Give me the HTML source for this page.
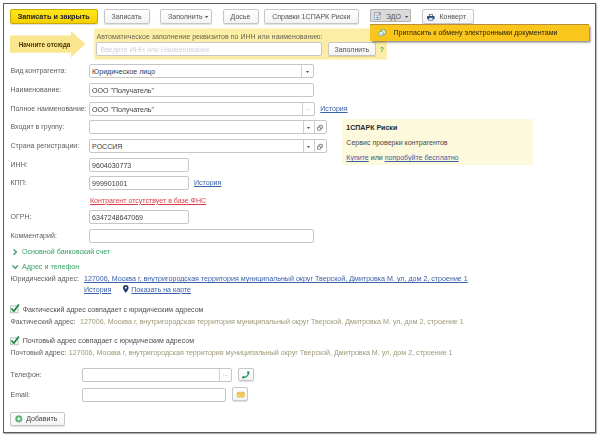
<!DOCTYPE html>
<html><head><meta charset="utf-8">
<style>
html,body{margin:0;padding:0;background:#fff;}
body{width:600px;height:436px;position:relative;overflow:hidden;font-family:"Liberation Sans",sans-serif;font-size:7.05px;color:#606060;}
.a{position:absolute;white-space:nowrap;line-height:10px;}
#frame{position:absolute;left:3px;top:3px;width:593px;height:430px;border:1px solid #5c5c5c;box-shadow:.5px .7px 0 rgba(0,0,0,.4), 1px 1px 2px rgba(0,0,0,.1);box-sizing:border-box;}
.btn{position:absolute;box-sizing:border-box;border:1px solid #c6c6c6;border-radius:2px;background:linear-gradient(#ffffff,#f3f3f3);height:14.5px;top:9.2px;line-height:14.3px;text-align:center;color:#555;white-space:nowrap;box-shadow:0 1px 1px rgba(0,0,0,.13);}
.inp{position:absolute;box-sizing:border-box;border:1px solid #c6c6c6;border-radius:2px;background:#fff;height:14px;line-height:13px;padding-left:2.6px;color:#3a3a3a;white-space:nowrap;}
.lnk{color:#3a62a8;text-decoration:underline;text-decoration-thickness:.6px;text-underline-offset:1px;}
.grn{color:#35a068;}
.olv{color:#9d9975;font-size:7.12px;}
.sb{position:absolute;box-sizing:border-box;border-left:1px solid #cfcfcf;top:0;bottom:0;text-align:center;color:#888;font-size:6px;line-height:11.5px;}
.ic{position:absolute;display:block;}
svg{overflow:visible}
#w{position:absolute;left:0;top:0;width:600px;height:436px;filter:blur(.3px);}
</style></head><body>
<div id="frame"></div>
<div id="w">


<div class="btn" style="left:10px;width:87.5px;background:linear-gradient(#ffe71c,#f5d000);border-color:#c7a900;color:#222;font-weight:bold;font-size:7.27px;">Записать и закрыть</div>
<div class="btn" style="left:103.5px;width:46px;">Записать</div>
<div class="btn" style="left:160px;width:51.5px;text-align:left;padding-left:7px;">Заполнить<svg class="ic" style="left:44px;top:5.6px" width="3.2" height="2" viewBox="0 0 32 20"><polygon points="0,0 32,0 16,20" fill="#444"/></svg></div>
<div class="btn" style="left:222.5px;width:36px;">Досье</div>
<div class="btn" style="left:264px;width:94.5px;">Справки 1СПАРК Риски</div>
<div class="btn" style="left:369.5px;width:41px;background:#dadada;border-color:#b4b4b4;border-radius:1px;text-align:left;padding-left:15.5px;height:13.2px;line-height:13.4px;box-shadow:none;">ЭДО<svg class="ic" style="left:34px;top:5.6px" width="3.2" height="2" viewBox="0 0 32 20"><polygon points="0,0 32,0 16,20" fill="#444"/></svg>
<svg class="ic" style="left:3.5px;top:2px" width="8" height="8.5" viewBox="0 0 80 85"><rect x="8" y="4" width="52" height="70" fill="#f4f6f8" stroke="#8a9098" stroke-width="7"/><rect x="18" y="18" width="32" height="7" fill="#9aa7b8"/><rect x="18" y="32" width="32" height="7" fill="#9aa7b8"/><circle cx="34" cy="56" r="12" fill="#4a8fc8" opacity=".85"/><rect x="52" y="0" width="12" height="30" fill="#7d858f"/></svg></div>
<div class="btn" style="left:422px;width:51.5px;text-align:left;padding-left:16.4px;">Конверт
<svg class="ic" style="left:4px;top:3.6px" width="7.6" height="6.6" viewBox="0 0 80 70"><rect x="20" y="0" width="40" height="22" rx="3" fill="#2b4f7e"/><rect x="27" y="6" width="26" height="14" fill="#fff"/><rect x="0" y="20" width="80" height="36" rx="8" fill="#2b4f7e"/><rect x="18" y="40" width="44" height="28" rx="2" fill="#fff" stroke="#2b4f7e" stroke-width="7"/></svg></div>


<svg class="ic" style="left:0;top:0" width="600" height="70" viewBox="0 0 600 70"><rect x="94.3" y="28.5" width="292.5" height="31" fill="#fdeea6"/></svg>
<svg class="ic" style="left:9.8px;top:30px" width="76" height="27.5" viewBox="0 0 76 27.5"><polygon points="0,5.5 60.9,5.5 60.9,0.7 75.3,14.1 60.9,27.5 60.9,22.8 0,22.8" fill="#fbe690"/></svg>
<div class="a" style="left:18.7px;top:39.5px;color:#4a3c08;font-weight:bold;font-size:6.45px;">Начните отсюда</div>
<div class="a" style="left:96.6px;top:31.7px;color:#6a6650;">Автоматическое заполнение реквизитов по ИНН или наименованию:</div>
<div class="inp" style="left:96px;top:42.4px;width:225.5px;color:#cfd3da;padding-left:3.5px;">Введите ИНН или Наименование</div>
<div class="btn" style="left:327.5px;top:42.4px;width:48.7px;height:13.8px;line-height:13.4px;">Заполнить</div>
<div class="a" style="left:380px;top:44.9px;color:#55a058;font-weight:bold;font-size:6.6px;">?</div>


<div class="a" style="left:369.5px;top:24px;width:219.5px;height:16.5px;background:#fac51c;border-top:.7px solid #b9903a;box-sizing:border-box;box-shadow:1.5px 1.8px 2.2px rgba(0,0,0,.55);"></div>
<svg class="ic" style="left:378.2px;top:28.9px" width="8.4" height="7.8" viewBox="0 0 90 84"><circle cx="56" cy="34" r="28" fill="#e9f2f7" stroke="#5aa05a" stroke-width="9"/><circle cx="32" cy="50" r="26" fill="#f4f8ff" stroke="#6aa86a" stroke-width="9"/><circle cx="32" cy="50" r="7" fill="#5b8fd0"/></svg>
<div class="a" style="left:393.4px;top:27.6px;color:#2a2410;font-size:7.1px;">Пригласить к обмену электронными документами</div>

<div class="a" style="left:10.5px;top:65.90px;">Вид контрагента:</div>
<div class="inp" style="left:88.5px;top:64.00px;width:225.3px;">Юридическое лицо<div class="sb" style="right:0px;width:11.5px"><svg class="ic" style="left:3.6px;top:5.5px" width="3" height="1.9" viewBox="0 0 34 22"><polygon points="0,0 34,0 17,22" fill="#444"/></svg></div></div>
<div class="a" style="left:10.5px;top:84.90px;">Наименование:</div>
<div class="inp" style="left:88.5px;top:83.00px;width:225.5px;">ООО "Получатель"</div>
<div class="a" style="left:10.5px;top:103.90px;">Полное наименование:</div>
<div class="inp" style="left:88.5px;top:102.00px;width:226px;">ООО "Получатель"<div class="sb" style="right:0px;width:11.5px">...</div></div>
<div class="a lnk" style="left:320.3px;top:104.20px;">История</div>
<div class="a" style="left:10.5px;top:121.90px;">Входит в группу:</div>
<div class="inp" style="left:88.5px;top:120.00px;width:238px;"><div class="sb" style="right:11.5px;width:11.5px"><svg class="ic" style="left:3.6px;top:5.5px" width="3" height="1.9" viewBox="0 0 34 22"><polygon points="0,0 34,0 17,22" fill="#444"/></svg></div><div class="sb" style="right:0px;width:11.5px"><svg class="ic" style="left:2.3px;top:3.5px" width="6" height="6" viewBox="0 0 60 60"><rect x="20" y="4" width="34" height="30" rx="4" fill="#fff" stroke="#555" stroke-width="7"/><rect x="5" y="22" width="32" height="30" rx="4" fill="#fff" stroke="#555" stroke-width="7"/></svg></div></div>
<div class="a" style="left:10.5px;top:140.90px;">Страна регистрации:</div>
<div class="inp" style="left:88.5px;top:139.00px;width:238px;">РОССИЯ<div class="sb" style="right:11.5px;width:11.5px"><svg class="ic" style="left:3.6px;top:5.5px" width="3" height="1.9" viewBox="0 0 34 22"><polygon points="0,0 34,0 17,22" fill="#444"/></svg></div><div class="sb" style="right:0px;width:11.5px"><svg class="ic" style="left:2.3px;top:3.5px" width="6" height="6" viewBox="0 0 60 60"><rect x="20" y="4" width="34" height="30" rx="4" fill="#fff" stroke="#555" stroke-width="7"/><rect x="5" y="22" width="32" height="30" rx="4" fill="#fff" stroke="#555" stroke-width="7"/></svg></div></div>
<div class="a" style="left:10.5px;top:159.90px;">ИНН:</div>
<div class="inp" style="left:88.5px;top:158.00px;width:100px;">9604030773</div>
<div class="a" style="left:10.5px;top:177.90px;">КПП:</div>
<div class="inp" style="left:88.5px;top:176.00px;width:100px;">999901001</div>
<div class="a lnk" style="left:194px;top:178.20px;">История</div>
<div class="a lnk" style="left:90px;top:195.50px;color:#d8404a;">Контрагент отсутствует в базе ФНС</div>
<div class="a" style="left:10.5px;top:211.90px;">ОГРН:</div>
<div class="inp" style="left:88.5px;top:210.00px;width:100px;">6347248647069</div>
<div class="a" style="left:10.5px;top:230.90px;">Комментарий:</div>
<div class="inp" style="left:88.5px;top:229.00px;width:225.5px;"></div>

<svg class="ic" style="left:13.1px;top:249.1px" width="4.2" height="6.2" viewBox="0 0 42 62"><path d="M5 4 L35 31 L5 58" fill="none" stroke="#3f9a6e" stroke-width="13"/></svg>
<div class="a grn" style="left:22px;top:247.1px;font-size:7.15px;">Основной банковский счет</div>
<svg class="ic" style="left:11.7px;top:264.7px" width="6.4" height="3.9" viewBox="0 0 64 39"><path d="M4 5 L32 33 L60 5" fill="none" stroke="#3f9a6e" stroke-width="13"/></svg>
<div class="a grn" style="left:22px;top:262px;font-size:7.15px;">Адрес и телефон</div>
<div class="a" style="left:10.5px;top:274px;">Юридический адрес:</div>
<div class="a lnk" style="left:84px;top:274px;font-size:7.12px;">127006, Москва г, внутригородская территория муниципальный округ Тверской, Дмитровка М. ул, дом 2, строение 1</div>
<div class="a lnk" style="left:84px;top:284.8px;">История</div>
<svg class="ic" style="left:122.8px;top:284.6px" width="5.6" height="7.8" viewBox="0 0 56 78"><path d="M28 0 C12 0 0 12 0 27 C0 46 28 78 28 78 C28 78 56 46 56 27 C56 12 44 0 28 0 Z" fill="#1f3566"/><circle cx="28" cy="28" r="10" fill="#fff"/></svg>
<div class="a lnk" style="left:131.3px;top:284.8px;">Показать на карте</div>

<svg class="ic" style="left:10.4px;top:304.3px" width="9.6" height="9.6" viewBox="0 0 100 100"><rect x="4" y="20" width="80" height="72" fill="#f6fbf7" stroke="#a9bcb0" stroke-width="9"/><path d="M20 52 L40 76 L88 10" fill="none" stroke="#1f8548" stroke-width="18" stroke-linecap="round" stroke-linejoin="round"/></svg>
<div class="a" style="left:22.7px;top:304.6px;color:#505050;">Фактический адрес совпадает с юридическим адресом</div>
<div class="a" style="left:10.5px;top:317.2px;">Фактический адрес:</div>
<div class="a olv" style="left:80px;top:317.2px;">127006, Москва г, внутригородская территория муниципальный округ Тверской, Дмитровка М. ул, дом 2, строение 1</div>
<svg class="ic" style="left:10.4px;top:335.79999999999995px" width="9.6" height="9.6" viewBox="0 0 100 100"><rect x="4" y="20" width="80" height="72" fill="#f6fbf7" stroke="#a9bcb0" stroke-width="9"/><path d="M20 52 L40 76 L88 10" fill="none" stroke="#1f8548" stroke-width="18" stroke-linecap="round" stroke-linejoin="round"/></svg>
<div class="a" style="left:22.7px;top:336.2px;color:#505050;">Почтовый адрес совпадает с юридическим адресом</div>
<div class="a" style="left:10.5px;top:348.2px;">Почтовый адрес:</div>
<div class="a olv" style="left:68.8px;top:348.2px;">127006, Москва г, внутригородская территория муниципальный округ Тверской, Дмитровка М. ул, дом 2, строение 1</div>

<div class="a" style="left:10.5px;top:369.5px;">Телефон:</div>
<div class="inp" style="left:82px;top:368px;width:149.5px;"><div class="sb" style="right:0;width:11.5px">...</div></div>
<div class="btn" style="left:237.5px;top:367.8px;width:16px;height:13.5px;"><svg class="ic" style="left:3.6px;top:2.2px" width="8" height="7.6" viewBox="0 0 80 76"><path d="M62 2 C70 0 78 8 76 16 C70 48 44 72 14 76 C6 77 0 70 2 62 L6 52 L24 50 L28 58 C42 52 54 40 58 26 L50 22 L52 4 Z" fill="#2a9a5a"/></svg></div>
<div class="a" style="left:10.5px;top:389.5px;">Email:</div>
<div class="inp" style="left:82px;top:387.6px;width:143.5px;"></div>
<div class="btn" style="left:231.5px;top:387.4px;width:16.5px;height:13.5px;"><svg class="ic" style="left:4px;top:3.6px" width="7.6" height="5.4" viewBox="0 0 84 60"><rect x="3" y="3" width="78" height="54" rx="8" fill="#f5d46a" stroke="#dfae3c" stroke-width="8"/><path d="M8 10 L42 34 L76 10" fill="none" stroke="#d9a030" stroke-width="8"/></svg></div>
<div class="btn" style="left:10.2px;top:411.6px;width:55px;height:14px;line-height:12px;text-align:left;padding-left:15px;color:#444;">Добавить<svg class="ic" style="left:3.4px;top:2.2px" width="7.6" height="7.6" viewBox="0 0 76 76"><circle cx="38" cy="38" r="34" fill="#3da557" stroke="#8fd09c" stroke-width="7"/><path d="M38 18 V58 M18 38 H58" stroke="#fff" stroke-width="13"/></svg></div>


<div class="a" style="left:341.7px;top:119.3px;width:191px;height:45.7px;background:#fdf9dc;"></div>
<div class="a" style="left:346.3px;top:122.9px;color:#2a2a2a;font-weight:bold;">1СПАРК Риски</div>
<div class="a" style="left:346.3px;top:138.2px;color:#4a4a4a;">Сервис проверки контрагентов</div>
<div class="a" style="left:346.3px;top:153.4px;color:#4a4a4a;"><span class="lnk">Купите</span> или <span class="lnk">попробуйте бесплатно</span></div>
</div>
</body></html>
